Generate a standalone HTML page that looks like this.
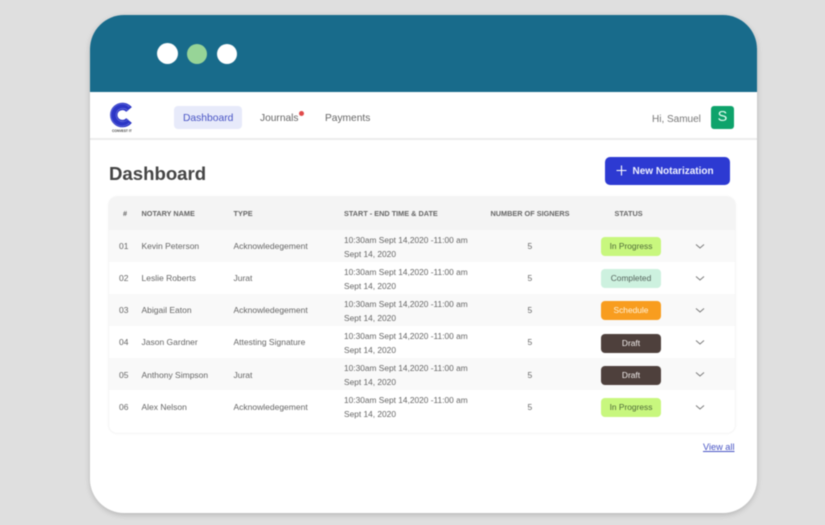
<!DOCTYPE html>
<html>
<head>
<meta charset="utf-8">
<style>
html,body{margin:0;padding:0;width:825px;height:525px;overflow:hidden;background:#dfdfdf;font-family:"Liberation Sans",sans-serif;}
*{box-sizing:border-box;}
.a{position:absolute;white-space:nowrap;}
#card{left:90px;top:15px;width:666.5px;height:498px;background:#fff;border-radius:34px;overflow:hidden;box-shadow:0 2px 6px rgba(0,0,0,.18);}
#top{left:0;top:0;width:667px;height:77px;background:#186b8b;}
#nav{left:0;top:77px;width:667px;height:48px;background:#fff;border-bottom:2px solid #ececec;}
.dot{border-radius:50%;background:#fff;}
.t{font-size:8.5px;color:#666;line-height:12px;}
.dt{font-size:8.35px;color:#666;line-height:14px;left:344px;}
.h{font-size:7.3px;color:#666;line-height:12px;font-weight:bold;top:208px;}
.row{position:absolute;left:109px;width:626px;height:32px;}
.b{position:absolute;left:601px;width:60px;height:19px;border-radius:4px;font-size:8.4px;line-height:19px;text-align:center;}
.p{background:#c8f77e;color:#4f6b38;}
.c{background:#cdf1df;color:#55645c;}
.s{background:#f89d1f;color:#fff3dc;}
.d{background:#4e403c;color:#f2eeec;}
svg{position:absolute;}
#wrap{filter:blur(.4px);position:absolute;left:0;top:0;width:825px;height:525px;}
</style>
</head>
<body>
<div id="wrap">
<div class="a" id="card">
  <div class="a" id="top"></div>
  <div class="a" id="nav"></div>
</div>
<div class="a dot" style="left:157px;top:43px;width:21px;height:21px;"></div>
<div class="a dot" style="left:187px;top:43.5px;width:20px;height:20px;background:#97d497;"></div>
<div class="a dot" style="left:217px;top:43.5px;width:20px;height:20px;"></div>

<svg style="left:107px;top:99.5px;" width="26" height="32" viewBox="0 0 26 32">
  <path d="M22 9.5A8.6 8.6 0 1 0 22 20.5" fill="none" stroke="#2c36c6" stroke-width="7.4"/>
  <path d="M22.5 7A11 11 0 1 0 22.5 23" fill="none" stroke="#6f77de" stroke-width=".6"/>
  <path d="M21 11A6.6 6.6 0 1 0 21 19" fill="none" stroke="#6f77de" stroke-width=".6"/>
</svg>
<div class="a" style="left:112px;top:128.5px;font-size:3.3px;line-height:4px;color:#444;font-weight:bold;">CONVEST IT</div>

<div class="a" style="left:174px;top:106px;width:68px;height:23px;background:#e7eafa;border-radius:4px;"></div>
<div class="a" style="left:183px;top:111.5px;font-size:10.3px;line-height:13px;color:#4753c4;">Dashboard</div>
<div class="a" style="left:260px;top:111.5px;font-size:10.2px;line-height:13px;color:#666;">Journals</div>
<div class="a" style="left:298.5px;top:110.5px;width:5px;height:5px;border-radius:50%;background:#e04a4a;"></div>
<div class="a" style="left:325px;top:111.5px;font-size:10.2px;line-height:13px;color:#666;">Payments</div>
<div class="a" style="left:652px;top:113px;font-size:10px;line-height:13px;color:#777;">Hi, Samuel</div>
<div class="a" style="left:711px;top:106px;width:23px;height:23px;background:#0ea36b;border-radius:3px;color:#e8fff4;font-size:14.5px;line-height:23px;text-align:center;">S</div>

<div class="a" style="left:109px;top:161px;font-size:18.6px;line-height:25px;font-weight:bold;color:#444;">Dashboard</div>

<div class="a" style="left:605px;top:156.5px;width:125px;height:28px;background:#2d3ad2;border-radius:5px;"></div>
<svg style="left:615px;top:164px;" width="13" height="13" viewBox="0 0 13 13"><path d="M6.5 1.5v10M1.5 6.5h10" stroke="#fff" stroke-width="1.1" fill="none"/></svg>
<div class="a" style="left:632.5px;top:164.5px;font-size:10px;line-height:13px;font-weight:bold;color:#eef0ff;">New Notarization</div>

<div class="a" style="left:109px;top:197px;width:626px;height:236px;border-radius:8px;overflow:hidden;box-shadow:0 0 2px rgba(0,0,0,.12);background:#fff;"></div>
<div class="a" style="left:109px;top:197px;width:626px;height:33px;background:#f4f4f4;border-radius:8px 8px 0 0;"></div>
<div class="a h" style="left:123px;">#</div>
<div class="a h" style="left:141.5px;">NOTARY NAME</div>
<div class="a h" style="left:233.5px;">TYPE</div>
<div class="a h" style="left:344px;">START - END TIME &amp; DATE</div>
<div class="a h" style="left:490.5px;">NUMBER OF SIGNERS</div>
<div class="a h" style="left:614.5px;">STATUS</div>

<div class="row" style="top:230px;background:#f9f9f9;"></div>
<div class="row" style="top:294px;background:#f9f9f9;"></div>
<div class="row" style="top:358px;background:#f9f9f9;"></div>

<!-- row 1 -->
<div class="a t" style="left:119px;top:240px;">01</div>
<div class="a t" style="left:141.5px;top:240px;">Kevin Peterson</div>
<div class="a t" style="left:233.5px;top:240px;">Acknowledegement</div>
<div class="a dt" style="top:232.5px;">10:30am Sept 14,2020 -11:00 am<br>Sept 14, 2020</div>
<div class="a t" style="left:527.5px;top:240px;">5</div>
<div class="b p" style="top:237px;">In Progress</div>
<svg style="left:695px;top:243px;" width="10" height="7" viewBox="0 0 10 7"><path d="M1 1.5L5 5L9 1.5" fill="none" stroke="#777" stroke-width=".9"/></svg>
<!-- row 2 -->
<div class="a t" style="left:119px;top:272px;">02</div>
<div class="a t" style="left:141.5px;top:272px;">Leslie Roberts</div>
<div class="a t" style="left:233.5px;top:272px;">Jurat</div>
<div class="a dt" style="top:264.5px;">10:30am Sept 14,2020 -11:00 am<br>Sept 14, 2020</div>
<div class="a t" style="left:527.5px;top:272px;">5</div>
<div class="b c" style="top:269px;">Completed</div>
<svg style="left:695px;top:275px;" width="10" height="7" viewBox="0 0 10 7"><path d="M1 1.5L5 5L9 1.5" fill="none" stroke="#777" stroke-width=".9"/></svg>
<!-- row 3 -->
<div class="a t" style="left:119px;top:304px;">03</div>
<div class="a t" style="left:141.5px;top:304px;">Abigail Eaton</div>
<div class="a t" style="left:233.5px;top:304px;">Acknowledegement</div>
<div class="a dt" style="top:296.5px;">10:30am Sept 14,2020 -11:00 am<br>Sept 14, 2020</div>
<div class="a t" style="left:527.5px;top:304px;">5</div>
<div class="b s" style="top:301px;">Schedule</div>
<svg style="left:695px;top:307px;" width="10" height="7" viewBox="0 0 10 7"><path d="M1 1.5L5 5L9 1.5" fill="none" stroke="#777" stroke-width=".9"/></svg>
<!-- row 4 -->
<div class="a t" style="left:119px;top:336px;">04</div>
<div class="a t" style="left:141.5px;top:336px;">Jason Gardner</div>
<div class="a t" style="left:233.5px;top:336px;">Attesting Signature</div>
<div class="a dt" style="top:328.5px;">10:30am Sept 14,2020 -11:00 am<br>Sept 14, 2020</div>
<div class="a t" style="left:527.5px;top:336px;">5</div>
<div class="b d" style="top:333.5px;">Draft</div>
<svg style="left:695px;top:339px;" width="10" height="7" viewBox="0 0 10 7"><path d="M1 1.5L5 5L9 1.5" fill="none" stroke="#777" stroke-width=".9"/></svg>
<!-- row 5 -->
<div class="a t" style="left:119px;top:368.5px;">05</div>
<div class="a t" style="left:141.5px;top:368.5px;">Anthony Simpson</div>
<div class="a t" style="left:233.5px;top:368.5px;">Jurat</div>
<div class="a dt" style="top:360.5px;">10:30am Sept 14,2020 -11:00 am<br>Sept 14, 2020</div>
<div class="a t" style="left:527.5px;top:368.5px;">5</div>
<div class="b d" style="top:365.5px;">Draft</div>
<svg style="left:695px;top:371px;" width="10" height="7" viewBox="0 0 10 7"><path d="M1 1.5L5 5L9 1.5" fill="none" stroke="#777" stroke-width=".9"/></svg>
<!-- row 6 -->
<div class="a t" style="left:119px;top:400.5px;">06</div>
<div class="a t" style="left:141.5px;top:400.5px;">Alex Nelson</div>
<div class="a t" style="left:233.5px;top:400.5px;">Acknowledegement</div>
<div class="a dt" style="top:392.5px;">10:30am Sept 14,2020 -11:00 am<br>Sept 14, 2020</div>
<div class="a t" style="left:527.5px;top:400.5px;">5</div>
<div class="b p" style="top:398px;">In Progress</div>
<svg style="left:695px;top:403.5px;" width="10" height="7" viewBox="0 0 10 7"><path d="M1 1.5L5 5L9 1.5" fill="none" stroke="#777" stroke-width=".9"/></svg>

<div class="a" style="left:703px;top:441px;font-size:9.2px;line-height:12px;color:#4753c4;text-decoration:underline;">View all</div>
</div>
</body>
</html>
